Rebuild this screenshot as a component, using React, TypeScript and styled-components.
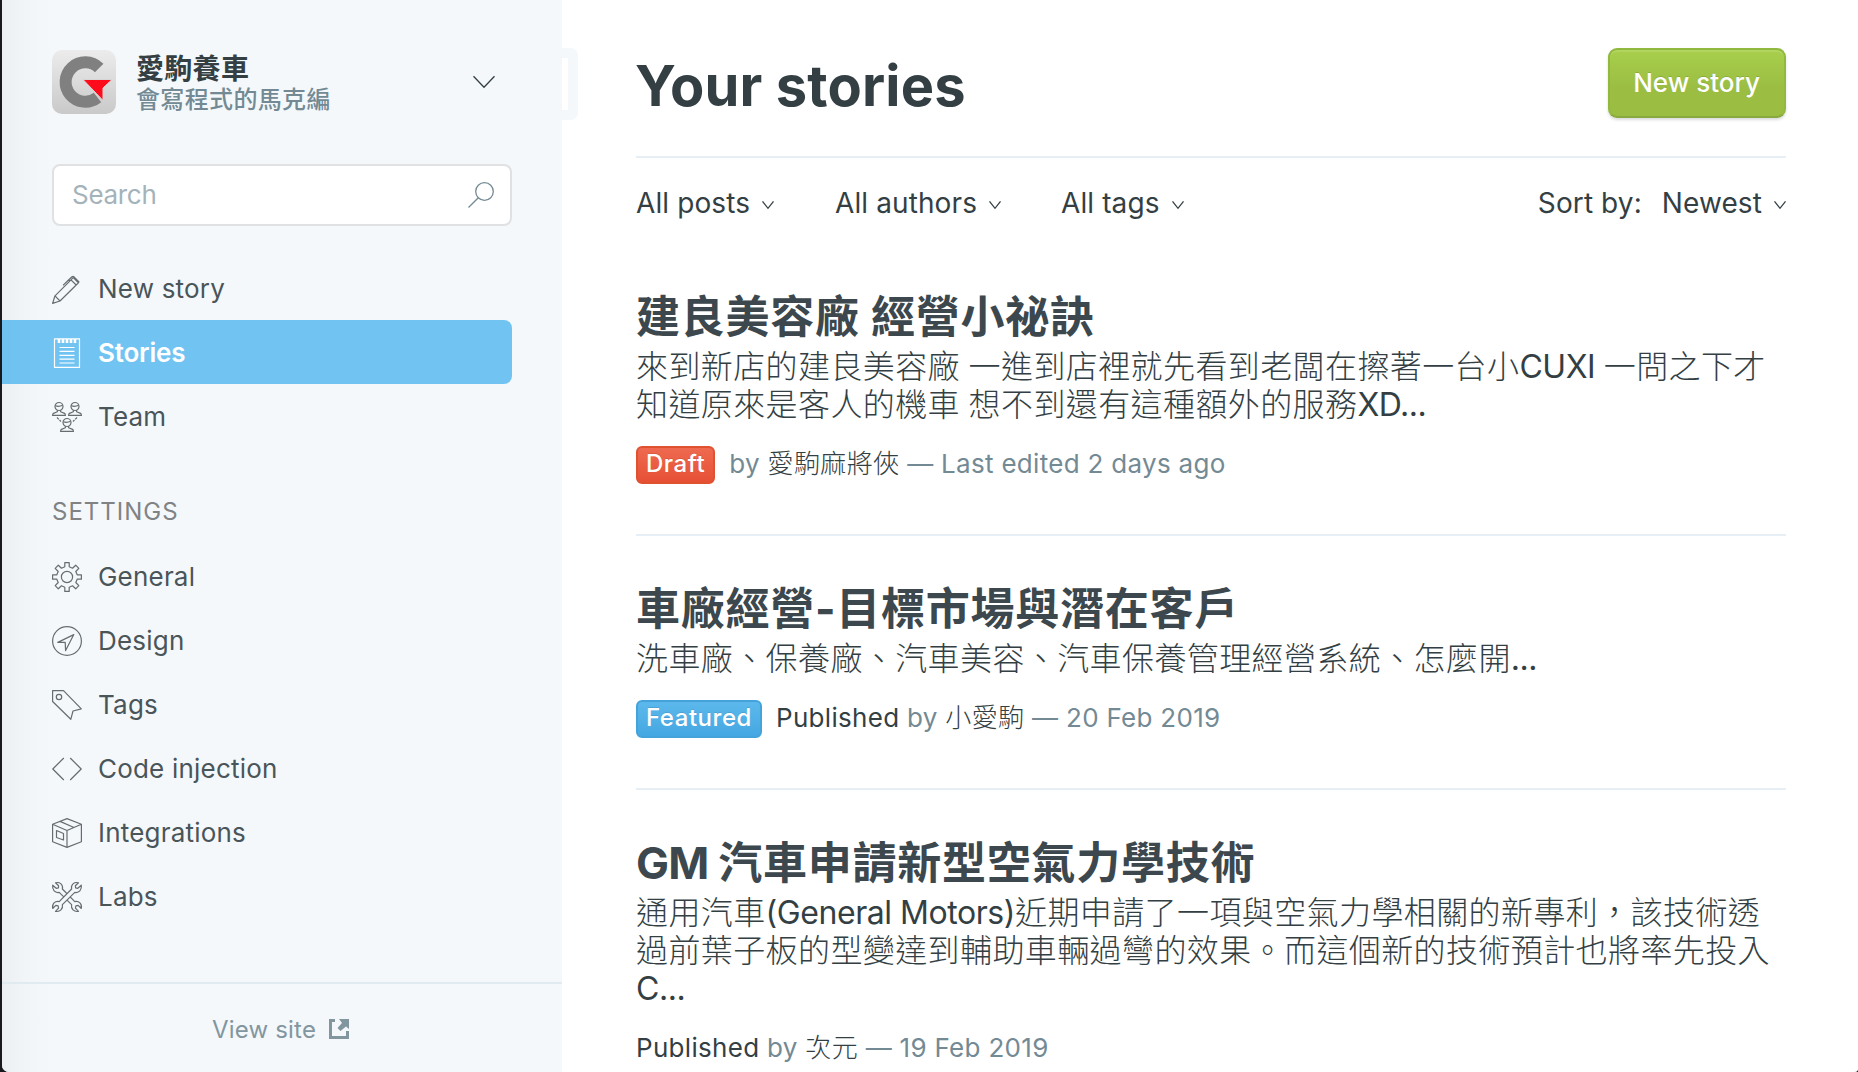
import React from "react";
import styled, { createGlobalStyle } from "styled-components";

const latin = `Inter, "Noto Sans CJK TC", sans-serif`;

const Global = createGlobalStyle`
  *, *::before, *::after { box-sizing: border-box; }
  html, body { margin: 0; height: 100%; background: #17191c; overflow: hidden; }
  body { font-family: ${latin}; font-size: 26px; letter-spacing: 0.2px; color: #343f44; -webkit-font-smoothing: antialiased; }
  h1, h2, p { margin: 0; }
  button { font: inherit; letter-spacing: inherit; color: inherit; border: 0; background: none; padding: 0; }
`;

const Window = styled.div`
  display: flex;
  width: 1856px;
  height: 1072px;
  margin-left: 2px;
  background: #fff;
  border-radius: 0 0 3px 7px;
  overflow: hidden;
`;

const Sidebar = styled.nav`
  flex: none;
  display: flex;
  flex-direction: column;
  width: 560px;
  background: linear-gradient(to right, rgba(0, 0, 0, 0.035), rgba(0, 0, 0, 0.012) 24px, transparent 52px), #f4f8fb;
`;

const BlogMenu = styled.header`
  display: flex;
  align-items: center;
  height: 64px;
  margin: 50px 67px 0 50px;
`;

const Logo = styled.svg`
  flex: none;
  width: 64px;
  height: 64px;
  margin-right: 20px;
`;

const BlogInfo = styled.div`
  flex: 1;
  padding-top: 4px;
`;

const BlogName = styled.div`
  font-size: 28px;
  font-weight: 700;
  line-height: 32px;
  letter-spacing: 0.3px;
`;

const UserName = styled.div`
  font-size: 24px;
  font-weight: 500;
  line-height: 30px;
  letter-spacing: 0.35px;
  color: #738a94;
`;

const SearchBox = styled.div`
  display: flex;
  align-items: center;
  justify-content: space-between;
  height: 62px;
  margin: 50px 50px 30px 50px;
  padding: 0 16px 2px 18px;
  border: 2px solid #dfe1e3;
  border-radius: 8px;
  background: #fff;
  letter-spacing: -0.3px;
  color: #a4b3ba;
  & > svg { margin-top: 2px; }
`;

const NavList = styled.ul`
  list-style: none;
  margin: 0;
  padding: 0;
`;

const NavItem = styled.li<{ $active?: boolean }>`
  display: flex;
  align-items: center;
  height: 64px;
  width: 510px;
  padding-left: 50px;
  border-radius: 0 8px 8px 0;
  font-weight: ${(p) => (p.$active ? 600 : 400)};
  letter-spacing: ${(p) => (p.$active ? -0.2 : 0.2)}px;
  color: ${(p) => (p.$active ? "#fff" : "#4a5559")};
  background: ${(p) => (p.$active ? "rgba(62, 176, 239, 0.72)" : "transparent")};
`;

const NavIcon = styled.svg<{ $active?: boolean }>`
  width: 30px;
  height: 30px;
  margin: 2px 16px 0 0;
  overflow: visible;
  fill: none;
  stroke: ${(p) => (p.$active ? "#fff" : "#666d70")};
  stroke-width: 1.2;
  stroke-linejoin: round;
`;

const SectionLabel = styled.div`
  margin: 49px 0 17px 50px;
  font-size: 24px;
  line-height: 30px;
  letter-spacing: 1px;
  color: #808284;
`;

const ViewSite = styled.footer`
  display: flex;
  align-items: center;
  justify-content: center;
  gap: 13px;
  height: 90px;
  margin-top: auto;
  padding: 2px 3px 0 0;
  border-top: 2px solid #dfebf1;
  font-size: 24px;
  color: #82969f;
`;

const Main = styled.main`
  flex: 1;
  padding: 0 72px 0 74px;
`;

const MenuTab = styled.span`
  position: absolute;
  left: 562px;
  top: 48px;
  width: 16px;
  height: 72px;
  border: 10px solid #f4f8fb;
  border-left: 0;
  border-radius: 0 8px 8px 0;
`;

const PageHeader = styled.header`
  display: flex;
  justify-content: space-between;
  height: 158px;
  padding-top: 48px;
  border-bottom: 2px solid #e5eff5;
`;

const PageTitle = styled.h1`
  margin-left: -1px;
  font-size: 56px;
  line-height: 76px;
  font-weight: 700;
  letter-spacing: 0.15px;
`;

const NewStoryButton = styled.button`
  width: 178px;
  height: 70px;
  padding: 0 1px 1px 0;
  border: 2px solid #91b83f;
  border-bottom-color: #88a93d;
  border-radius: 9px;
  background: linear-gradient(#a8cf4c, #9abd42 60%);
  box-shadow: inset 0 2px 0 rgba(255, 255, 255, 0.12), 0 2px 3px rgba(0, 0, 0, 0.14);
  color: #fff;
  font-weight: 500;
  letter-spacing: 0;
  text-shadow: 0 -1px 0 rgba(0, 0, 0, 0.12);
`;

const Filters = styled.div`
  display: flex;
  align-items: center;
  height: 89px;
  padding-top: 1px;
  font-size: 28px;
  letter-spacing: 0.1px;
`;

const Filter = styled.span<{ $gap?: number }>`
  display: flex;
  align-items: center;
  gap: 12px;
  margin-right: ${(p) => p.$gap ?? 0}px;
  & > svg { margin-top: 3px; }
`;

const SortLabel = styled.span`
  margin: 0 20px 0 auto;
`;

const Story = styled.article`
  padding: 48px 0 50px;
  border-bottom: 2px solid #e5eff5;
  &:first-of-type { padding-top: 45px; }
`;

const StoryTitle = styled.h2`
  font-size: 44px;
  line-height: 50px;
  font-weight: 700;
  letter-spacing: 0.75px;
  color: #3c484d;
`;

const TitleLatin = styled.span`
  letter-spacing: -0.7px;
`;

const Excerpt = styled.p`
  margin-top: 6px;
  font-size: 32px;
  line-height: 38px;
  letter-spacing: -0.45px;
  white-space: nowrap;
`;

const Light = styled.span`
  font-family: "Noto Sans CJK TC", sans-serif;
  font-weight: 300;
  line-height: 0;
  letter-spacing: 0.4px;
`;

const Meta = styled.div`
  display: flex;
  align-items: center;
  height: 38px;
  margin-top: 22px;
  padding-bottom: 4px;
  letter-spacing: 0.3px;
  white-space: pre;
  color: #738a94;
`;

const Dark = styled.span`
  color: #343f44;
`;

const Badge = styled.span<{ $tone: "red" | "blue" }>`
  display: flex;
  flex: none;
  align-items: center;
  align-self: flex-start;
  height: 38px;
  padding: 0 8px 3px;
  margin-right: 14px;
  border: 2px solid ${(p) => (p.$tone === "red" ? "#e0512f" : "#45a3dc")};
  border-radius: 6px;
  background: ${(p) => (p.$tone === "red" ? "linear-gradient(#ee6a50, #e65035)" : "linear-gradient(#5cb8ec, #45a8e2)")};
  color: #fff;
  font-size: 24px;
  font-weight: 500;
  letter-spacing: 0.55px;
  text-shadow: 0 -1px 0 rgba(0, 0, 0, 0.1);
`;

const Chevron = ({ w = 12, h = 8 }: { w?: number; h?: number }) => (
  <svg width={w} height={h} viewBox={`0 0 ${w} ${h}`} fill="none" stroke="#343f44" strokeWidth="1.3" overflow="visible">
    <path d={`M.5 .3 L${w / 2} ${h - 0.7} L${w - 0.5} .3`} />
  </svg>
);

const person = (x: number, y: number) => (
  <g transform={`translate(${x} ${y})`}>
    <circle cx="7" cy="4.5" r="4" />
    <path d="M3.2 3.8q4 1.2 7.4-.6M5.4 8.2v1.6L1.4 11.4Q.6 11.8.6 13.4H13.4Q13.4 11.8 12.6 11.4L8.6 9.8V8.2" />
  </g>
);

const wrench = "M.7 3.2 4.2 6.3 6.4 5.9 6.6 3.8 3.5.8C8-.4 11.3 2.7 10.4 7L22.8 19.6C26.8 18.7 30.3 21.7 29.3 26.5L26.2 23.4 23.9 23.9 23.4 26.2 26.5 29.3C22 30.3 18.7 26.8 19.6 22.6L7.2 10.4C3 11.2 0 8 .7 3.2Z";

const icons: Record<string, React.ReactNode> = {
  pen: <path d="M.6 29.4 3 21.8 19 5.8 24.2 11 8 27ZM3 21.8 8 27M19 5.8 21.2 3.6 26.4 8.8 24.2 11M18 7 16.8 5.8 11 11.4M16.8 5.8 20 2.8Q21 2 22 2.8L27 7.8 26.4 8.8" />,
  stories: (
    <>
      <path d="M2.5 .8H27.5V29.3H2.5ZM7.5 9.5H22.5M7.5 13.4H22.5M7.5 17.3H22.5M7.5 21.2H22.5M7.5 25H22.5" />
      <path d="M7 1V5M11 1V5M15 1V5M19 1V5M23 1V5" strokeWidth="2.6" />
    </>
  ),
  team: (
    <>
      {person(0, 0)}
      {person(16, 0)}
      {person(8, 16)}
      <path d="M5 15.5 9 19.5M25 15.5 21 19.5" strokeDasharray="2.6 1" />
    </>
  ),
  general: (
    <>
      <circle cx="15" cy="15" r="5.6" />
      <path d="M12.8 .6H17.2V4.8L20.5 6.2 23.7 3.2 26.8 6.3 23.8 9.5 25.2 12.8H29.4V17.2H25.2L23.8 20.5 26.8 23.7 23.7 26.8 20.5 23.8 17.2 25.2V29.4H12.8V25.2L9.5 23.8 6.3 26.8 3.2 23.7 6.2 20.5 4.8 17.2H.6V12.8H4.8L6.2 9.5 3.2 6.3 6.3 3.2 9.5 6.2 12.8 4.8Z" />
    </>
  ),
  design: (
    <>
      <circle cx="15" cy="15" r="14.4" />
      <path d="M21.8 8.6 5.8 16.4H13.2L13.6 24.6Z" />
    </>
  ),
  tags: (
    <>
      <circle cx="7" cy="7" r="2.7" />
      <path d="M.6 .6H11.5L29.3 18.9 21 21 18.8 29.3 .6 11.5Z" />
    </>
  ),
  code: <path d="M11.8 4 .8 15 11.8 26M18.2 4 29.2 15 18.2 26" />,
  box: (
    <>
      <path d="M15 .6 29.4 6.2V23.8L15 29.4 .6 23.8V6.2ZM.6 6.2 15 12.5 29.4 6.2M15 12.5V29.4M8 3.4 22 9.5" />
      <path d="M4.5 12.5 11.5 15.5V22L4.5 19.5Z" />
    </>
  ),
  labs: (
    <>
      <path d={wrench} />
      <path d={wrench} transform="translate(30 0) scale(-1 1)" fill="#f4f8fb" />
    </>
  ),
};

const NavEntry = ({ icon, label, active }: { icon: string; label: string; active?: boolean }) => (
  <NavItem $active={active}>
    <NavIcon $active={active} viewBox="0 0 30 30">{icons[icon]}</NavIcon>
    {label}
  </NavItem>
);

export default function App() {
  return (
    <>
      <Global />
      <Window>
        <Sidebar>
          <BlogMenu>
            <Logo viewBox="0 0 64 64">
              <defs>
                <linearGradient id="tile" x1="0" y1="0" x2="0" y2="1">
                  <stop offset="0" stopColor="#ececec" />
                  <stop offset="1" stopColor="#c9c9c9" />
                </linearGradient>
              </defs>
              <rect width="64" height="64" rx="10" fill="url(#tile)" />
              <path d="M47.2 18A19.7 19.7 0 1 0 45.5 47.5" fill="none" stroke="#808080" strokeWidth="12" />
              <path d="M31 29.5H60L51 38V50.5Z" fill="#ff0c1c" stroke="#d6d6d6" strokeWidth="1" />
            </Logo>
            <BlogInfo>
              <BlogName>愛駒養車</BlogName>
              <UserName>會寫程式的馬克編</UserName>
            </BlogInfo>
            <Chevron w={22} h={12} />
          </BlogMenu>
          <SearchBox>
            Search
            <svg width="26" height="26" viewBox="0 0 26 26" fill="none" stroke="#738a94" strokeWidth="1.3">
              <circle cx="16.5" cy="9.5" r="8.8" />
              <path d="M10.3 15.7 .5 25.5" />
            </svg>
          </SearchBox>
          <NavList>
            <NavEntry icon="pen" label="New story" />
            <NavEntry icon="stories" label="Stories" active />
            <NavEntry icon="team" label="Team" />
          </NavList>
          <SectionLabel>SETTINGS</SectionLabel>
          <NavList>
            <NavEntry icon="general" label="General" />
            <NavEntry icon="design" label="Design" />
            <NavEntry icon="tags" label="Tags" />
            <NavEntry icon="code" label="Code injection" />
            <NavEntry icon="box" label="Integrations" />
            <NavEntry icon="labs" label="Labs" />
          </NavList>
          <ViewSite>
            View site
            <svg width="20" height="20" viewBox="0 0 20 20" fill="#82969f">
              <path d="M0 0H6V3H3V17H17V12H20V20H0ZM10 0H20V10L17 7.5 11.5 12 8.500 9 13 4Z" />
            </svg>
          </ViewSite>
        </Sidebar>
        <MenuTab />
        <Main>
          <PageHeader>
            <PageTitle>Your stories</PageTitle>
            <NewStoryButton>New story</NewStoryButton>
          </PageHeader>
          <Filters>
            <Filter $gap={61}>All posts <Chevron /></Filter>
            <Filter $gap={60}>All authors <Chevron /></Filter>
            <Filter>All tags <Chevron /></Filter>
            <SortLabel>Sort by:</SortLabel>
            <Filter>Newest <Chevron /></Filter>
          </Filters>
          <Story>
            <StoryTitle>建良美容廠 經營小祕訣</StoryTitle>
            <Excerpt>
              <Light>來到新店的建良美容廠</Light> <Light>一進到店裡就先看到老闆在擦著一台小</Light>CUXI <Light>一問之下才</Light>
              <br />
              <Light>知道原來是客人的機車</Light> <Light>想不到還有這種額外的服務</Light>XD...
            </Excerpt>
            <Meta>
              <Badge $tone="red">Draft</Badge>
              by <Dark><Light>愛駒麻將俠</Light></Dark> — Last edited 2 days ago
            </Meta>
          </Story>
          <Story>
            <StoryTitle>車廠經營-目標市場與潛在客戶</StoryTitle>
            <Excerpt>
              <Light>洗車廠、保養廠、汽車美容、汽車保養管理經營系統、怎麼開</Light>...
            </Excerpt>
            <Meta>
              <Badge $tone="blue">Featured</Badge>
              <Dark>Published</Dark> by <Dark><Light>小愛駒</Light></Dark> — 20 Feb 2019
            </Meta>
          </Story>
          <Story>
            <StoryTitle><TitleLatin>GM </TitleLatin>汽車申請新型空氣力學技術</StoryTitle>
            <Excerpt>
              <Light>通用汽車</Light>(General Motors)<Light>近期申請了一項與空氣力學相關的新專利，該技術透</Light>
              <br />
              <Light>過前葉子板的型變達到輔助車輛過彎的效果。而這個新的技術預計也將率先投入</Light>
              <br />
              C...
            </Excerpt>
            <Meta>
              <Dark>Published</Dark> by <Dark><Light>次元</Light></Dark> — 19 Feb 2019
            </Meta>
          </Story>
        </Main>
      </Window>
    </>
  );
}
